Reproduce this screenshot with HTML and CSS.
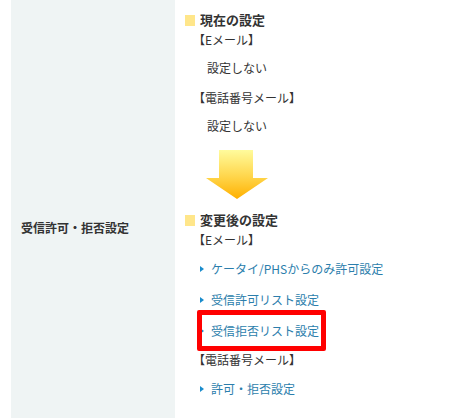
FILE: index.html
```html
<!DOCTYPE html>
<html lang="ja">
<head>
<meta charset="utf-8">
<link rel="stylesheet" href="styles.css">
</head>
<body>
<div class="row">
  <div class="th"><span>受信許可・拒否設定</span></div>
  <div class="td">
    <div class="head"><i class="sq"></i>現在の設定</div>
    <div class="label">【Eメール】</div>
    <div class="value">設定しない</div>
    <div class="label">【電話番号メール】</div>
    <div class="value">設定しない</div>
    <div class="arrow">
      <svg width="64" height="50" viewBox="0 0 64 50">
        <defs>
          <linearGradient id="g" x1="0" y1="0" x2="0" y2="1">
            <stop offset="0" stop-color="#fffb9c"/>
            <stop offset="0.55" stop-color="#ffd54a"/>
            <stop offset="1" stop-color="#ffb000"/>
          </linearGradient>
        </defs>
        <path d="M14 0 H48 V28 H63 L32 49 L1 28 H14 Z" fill="url(#g)"/>
      </svg>
    </div>
    <div class="head"><i class="sq"></i>変更後の設定</div>
    <div class="label">【Eメール】</div>
    <ul class="links">
      <li><a>ケータイ/PHSからのみ許可設定</a></li>
      <li><a>受信許可リスト設定</a></li>
      <li class="marked"><a>受信拒否リスト設定</a><span class="redbox"></span></li>
    </ul>
    <div class="label">【電話番号メール】</div>
    <ul class="links">
      <li><a>許可・拒否設定</a></li>
    </ul>
  </div>
</div>
</body>
</html>
```

FILE: styles.css
```css
html, body {
  margin: 0;
  padding: 0;
  background: #ffffff;
}
body {
  font-family: "Noto Sans CJK JP", "Liberation Sans", sans-serif;
  font-size: 12px;
  color: #333333;
  overflow: hidden;
  height: 418px;
}
.row {
  display: flex;
  margin-left: 11px;
  height: 418px;
}
.th {
  width: 154px;
  padding: 36px 0 0 10px;
  background: #eff4f4;
  display: flex;
  align-items: center;
  font-weight: bold;
  color: #333333;
}
.td {
  padding: 10px 0 0 10px;
  flex: 1;
}
.head {
  display: flex;
  align-items: center;
  height: 20px;
  line-height: 20px;
  font-weight: bold;
  font-size: 13px;
}
.sq {
  display: block;
  width: 10px;
  height: 11px;
  background: #ffe68a;
  margin-right: 5px;
}
.label {
  line-height: 20px;
  height: 20px;
  margin-left: 8px;
}
.value {
  line-height: 20px;
  height: 20px;
  margin: 8px 0 10px 22px;
}
.arrow {
  margin: 14px 0 10px 20px;
  height: 50px;
}
.arrow svg {
  display: block;
}
.links {
  list-style: none;
  margin: 9px 0 9px 15px;
  padding: 0;
  display: flex;
  flex-direction: column;
  gap: 11px;
}
.links li {
  position: relative;
  line-height: 20px;
  height: 20px;
  padding-left: 11px;
}
.links li::before {
  content: "";
  position: absolute;
  left: 0;
  top: 7px;
  border-left: 4px solid #1a8ccc;
  border-top: 3px solid transparent;
  border-bottom: 3px solid transparent;
}
.links a {
  color: #2b7eac;
  text-decoration: none;
}
.redbox {
  position: absolute;
  left: -3px;
  top: -11px;
  width: 129px;
  height: 41px;
  box-sizing: border-box;
  border: 5px solid #ff0000;
  border-radius: 2px;
}
```
